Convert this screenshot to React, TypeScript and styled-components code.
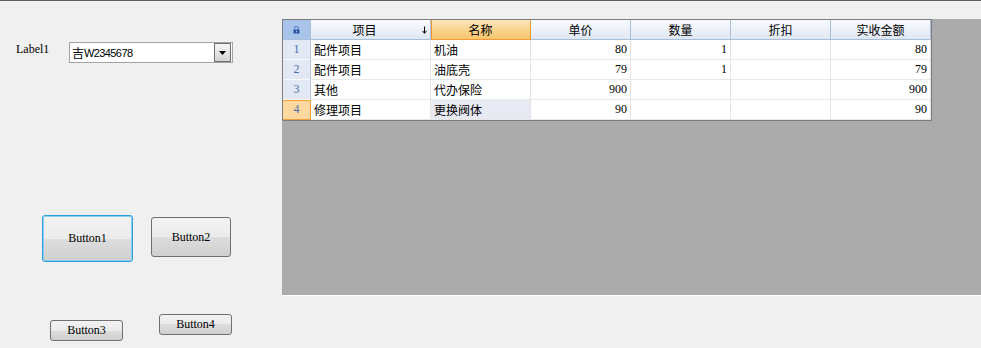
import React from "react";
import styled, { createGlobalStyle, css } from "styled-components";

const GlobalStyle = createGlobalStyle`
  html, body { margin: 0; padding: 0; background: #f0f0f0; }
  body { font-family: "Liberation Serif", serif; }
  #root { width: 981px; height: 348px; overflow: hidden; }
  *, *::before, *::after { box-sizing: border-box; }
`;

const cjk = `"Noto Sans CJK SC", sans-serif`;

const Window = styled.div`
  width: 981px;
  height: 348px;
  border-top: 1px solid #5f5f5f;
  display: flex;
  align-items: flex-start;
  background: #f0f0f0;
`;

const LeftPane = styled.div`
  width: 282px;
  flex: none;
  display: flex;
  flex-direction: column;
`;

const FieldRow = styled.div`
  display: flex;
  align-items: flex-start;
  margin-top: 41px;
  padding-left: 16px;
`;

const FieldLabel = styled.span`
  width: 53px;
  font: 12px/14px "Liberation Serif", serif;
  color: #000;
`;

const Combo = styled.div`
  width: 164px;
  height: 21px;
  border: 1px solid #a3a3a3;
  background: #fff;
  display: flex;
  align-items: stretch;
  padding-right: 1px;
`;

const ComboText = styled.span`
  flex: 1;
  padding-left: 2px;
  line-height: 19px;
  font-size: 11px;
  color: #000;
  white-space: nowrap;
  display: flex;
  align-items: center;
`;

const ComboCjk = styled.span`
  font: 12px ${cjk};
`;

const ComboLatin = styled.span`
  font: 11px "Liberation Sans", sans-serif;
  letter-spacing: -0.6px;
`;

const DropButton = styled.div`
  width: 17px;
  border: 1px solid #6f6f6f;
  background: linear-gradient(#f6f6f6, #e6e6e6 50%, #d4d4d4);
  display: flex;
  align-items: center;
  justify-content: center;
  padding-top: 1px;
`;

const ButtonRow = styled.div<{ $top: number; $left: number; $gap: number }>`
  display: flex;
  align-items: flex-start;
  margin-top: ${(p) => p.$top}px;
  padding-left: ${(p) => p.$left}px;
  gap: ${(p) => p.$gap}px;
`;

const WinButton = styled.div<{ $w: number; $h: number; $offset?: number; $focused?: boolean }>`
  width: ${(p) => p.$w}px;
  height: ${(p) => p.$h}px;
  margin-top: ${(p) => p.$offset ?? 0}px;
  border: 1px solid #707070;
  border-radius: 3px;
  background: linear-gradient(#f2f2f2 0%, #ebebeb 50%, #dddddd 50%, #cfcfcf 100%);
  display: flex;
  align-items: center;
  justify-content: center;
  padding-bottom: 1px;
  font: 12px/14px "Liberation Serif", serif;
  color: #000;
  ${(p) =>
    p.$focused &&
    css`
      border-color: #2c9fd9;
      box-shadow: inset 0 0 0 1px #8fd0f0;
    `}
`;

const GridPanel = styled.div`
  flex: 1;
  margin-top: 18px;
  height: 277px;
  background: #ababab;
  border-bottom: 1px solid #ffffff;
`;

const Table = styled.div`
  width: 650px;
  display: grid;
  grid-template-columns: 28px 120px repeat(5, 100px);
  grid-auto-rows: 20px;
  border: 1px solid #7d7d7d;
  background: #fff;
`;

const Corner = styled.div`
  background: #a9c4ea;
  border-right: 1px solid #a9bfd9;
  border-bottom: 1px solid #a9bfd9;
  display: flex;
  align-items: center;
  justify-content: center;
`;

const HeaderCell = styled.div<{ $active?: boolean }>`
  display: flex;
  align-items: center;
  border-right: 1px solid #a9bfd9;
  border-bottom: 1px solid #a9bfd9;
  background: linear-gradient(#f9fbfe 0%, #eef3fa 45%, #dfe7f3 100%);
  font: 12px ${cjk};
  color: #000;
  ${(p) =>
    p.$active &&
    css`
      background: linear-gradient(#fce6b9 0%, #f9d48f 50%, #f7c66f 100%);
      border-color: #f29b36;
      box-shadow: inset 1px 0 0 #f29b36;
    `}
`;

const HeaderText = styled.span`
  flex: 1;
  text-align: center;
`;

const SortMark = styled.span`
  width: 12px;
  flex: none;
  display: flex;
  justify-content: center;
  padding-top: 1px;
`;

const RowHead = styled.div<{ $current?: boolean }>`
  background: #e2e9f5;
  border-right: 1px solid #b4c7de;
  border-bottom: 1px solid #f7f9fc;
  display: flex;
  align-items: center;
  justify-content: center;
  font: 12px "Liberation Serif", serif;
  color: #4a6fae;
  ${(p) =>
    p.$current &&
    css`
      background: #fdd89f;
      border-right-color: #f2a03c;
      border-bottom-color: #f2a03c;
      box-shadow: inset 0 1px 0 #f2a03c;
    `}
`;

const Cell = styled.div<{ $num?: boolean; $selected?: boolean }>`
  display: flex;
  align-items: center;
  justify-content: ${(p) => (p.$num ? "flex-end" : "flex-start")};
  padding: 0 3px;
  border-right: 1px solid #e4e4e4;
  border-bottom: 1px solid #e8e8e8;
  background: ${(p) => (p.$selected ? "#e7e9f3" : "#ffffff")};
  font: ${(p) => (p.$num ? `12px "Liberation Serif", serif` : `12px ${cjk}`)};
  color: #000;
  white-space: nowrap;
`;

const LockIcon = () => (
  <svg width="7" height="8" viewBox="0 0 7 8">
    <path d="M1.5 3.5V2.3a2 2 0 0 1 4 0v1.2" stroke="#4a6fb8" strokeWidth="1" fill="none" />
    <rect x="0.5" y="3.5" width="6" height="4" fill="#2d55a6" />
    <rect x="3" y="4.8" width="1" height="1.5" fill="#a9c4ea" />
  </svg>
);

const SortArrow = () => (
  <svg width="5" height="8" viewBox="0 0 5 8">
    <path d="M2.5 0.5V7.2M0.5 4.8L2.5 7.3L4.5 4.8" stroke="#000" strokeWidth="1" fill="none" />
  </svg>
);

const DropTriangle = () => (
  <svg width="7" height="4" viewBox="0 0 7 4">
    <path d="M0 0H7L3.5 4Z" fill="#000" />
  </svg>
);

type Row = { item: string; name: string; price: string; qty: string; discount: string; total: string };

const rows: Row[] = [
  { item: "配件项目", name: "机油", price: "80", qty: "1", discount: "", total: "80" },
  { item: "配件项目", name: "油底壳", price: "79", qty: "1", discount: "", total: "79" },
  { item: "其他", name: "代办保险", price: "900", qty: "", discount: "", total: "900" },
  { item: "修理项目", name: "更换阀体", price: "90", qty: "", discount: "", total: "90" },
];

const headers = ["单价", "数量", "折扣", "实收金额"];

export default function App() {
  const currentRow = 3;
  return (
    <>
      <GlobalStyle />
      <Window>
        <LeftPane>
          <FieldRow>
            <FieldLabel>Label1</FieldLabel>
            <Combo>
              <ComboText>
                <ComboCjk>吉</ComboCjk>
                <ComboLatin>W2345678</ComboLatin>
              </ComboText>
              <DropButton>
                <DropTriangle />
              </DropButton>
            </Combo>
          </FieldRow>
          <ButtonRow $top={152} $left={42} $gap={18}>
            <WinButton $w={91} $h={47} $focused>
              Button1
            </WinButton>
            <WinButton $w={80} $h={40} $offset={2}>
              Button2
            </WinButton>
          </ButtonRow>
          <ButtonRow $top={52} $left={50} $gap={36}>
            <WinButton $w={73} $h={21} $offset={6}>
              Button3
            </WinButton>
            <WinButton $w={73} $h={21}>
              Button4
            </WinButton>
          </ButtonRow>
        </LeftPane>
        <GridPanel>
          <Table>
            <Corner>
              <LockIcon />
            </Corner>
            <HeaderCell>
              <HeaderText>项目</HeaderText>
              <SortMark>
                <SortArrow />
              </SortMark>
            </HeaderCell>
            <HeaderCell $active>
              <HeaderText>名称</HeaderText>
            </HeaderCell>
            {headers.map((h) => (
              <HeaderCell key={h}>
                <HeaderText>{h}</HeaderText>
              </HeaderCell>
            ))}
            {rows.map((r, i) => (
              <React.Fragment key={i}>
                <RowHead $current={i === currentRow}>{i + 1}</RowHead>
                <Cell>{r.item}</Cell>
                <Cell $selected={i === currentRow}>{r.name}</Cell>
                <Cell $num>{r.price}</Cell>
                <Cell $num>{r.qty}</Cell>
                <Cell $num>{r.discount}</Cell>
                <Cell $num>{r.total}</Cell>
              </React.Fragment>
            ))}
          </Table>
        </GridPanel>
      </Window>
    </>
  );
}
